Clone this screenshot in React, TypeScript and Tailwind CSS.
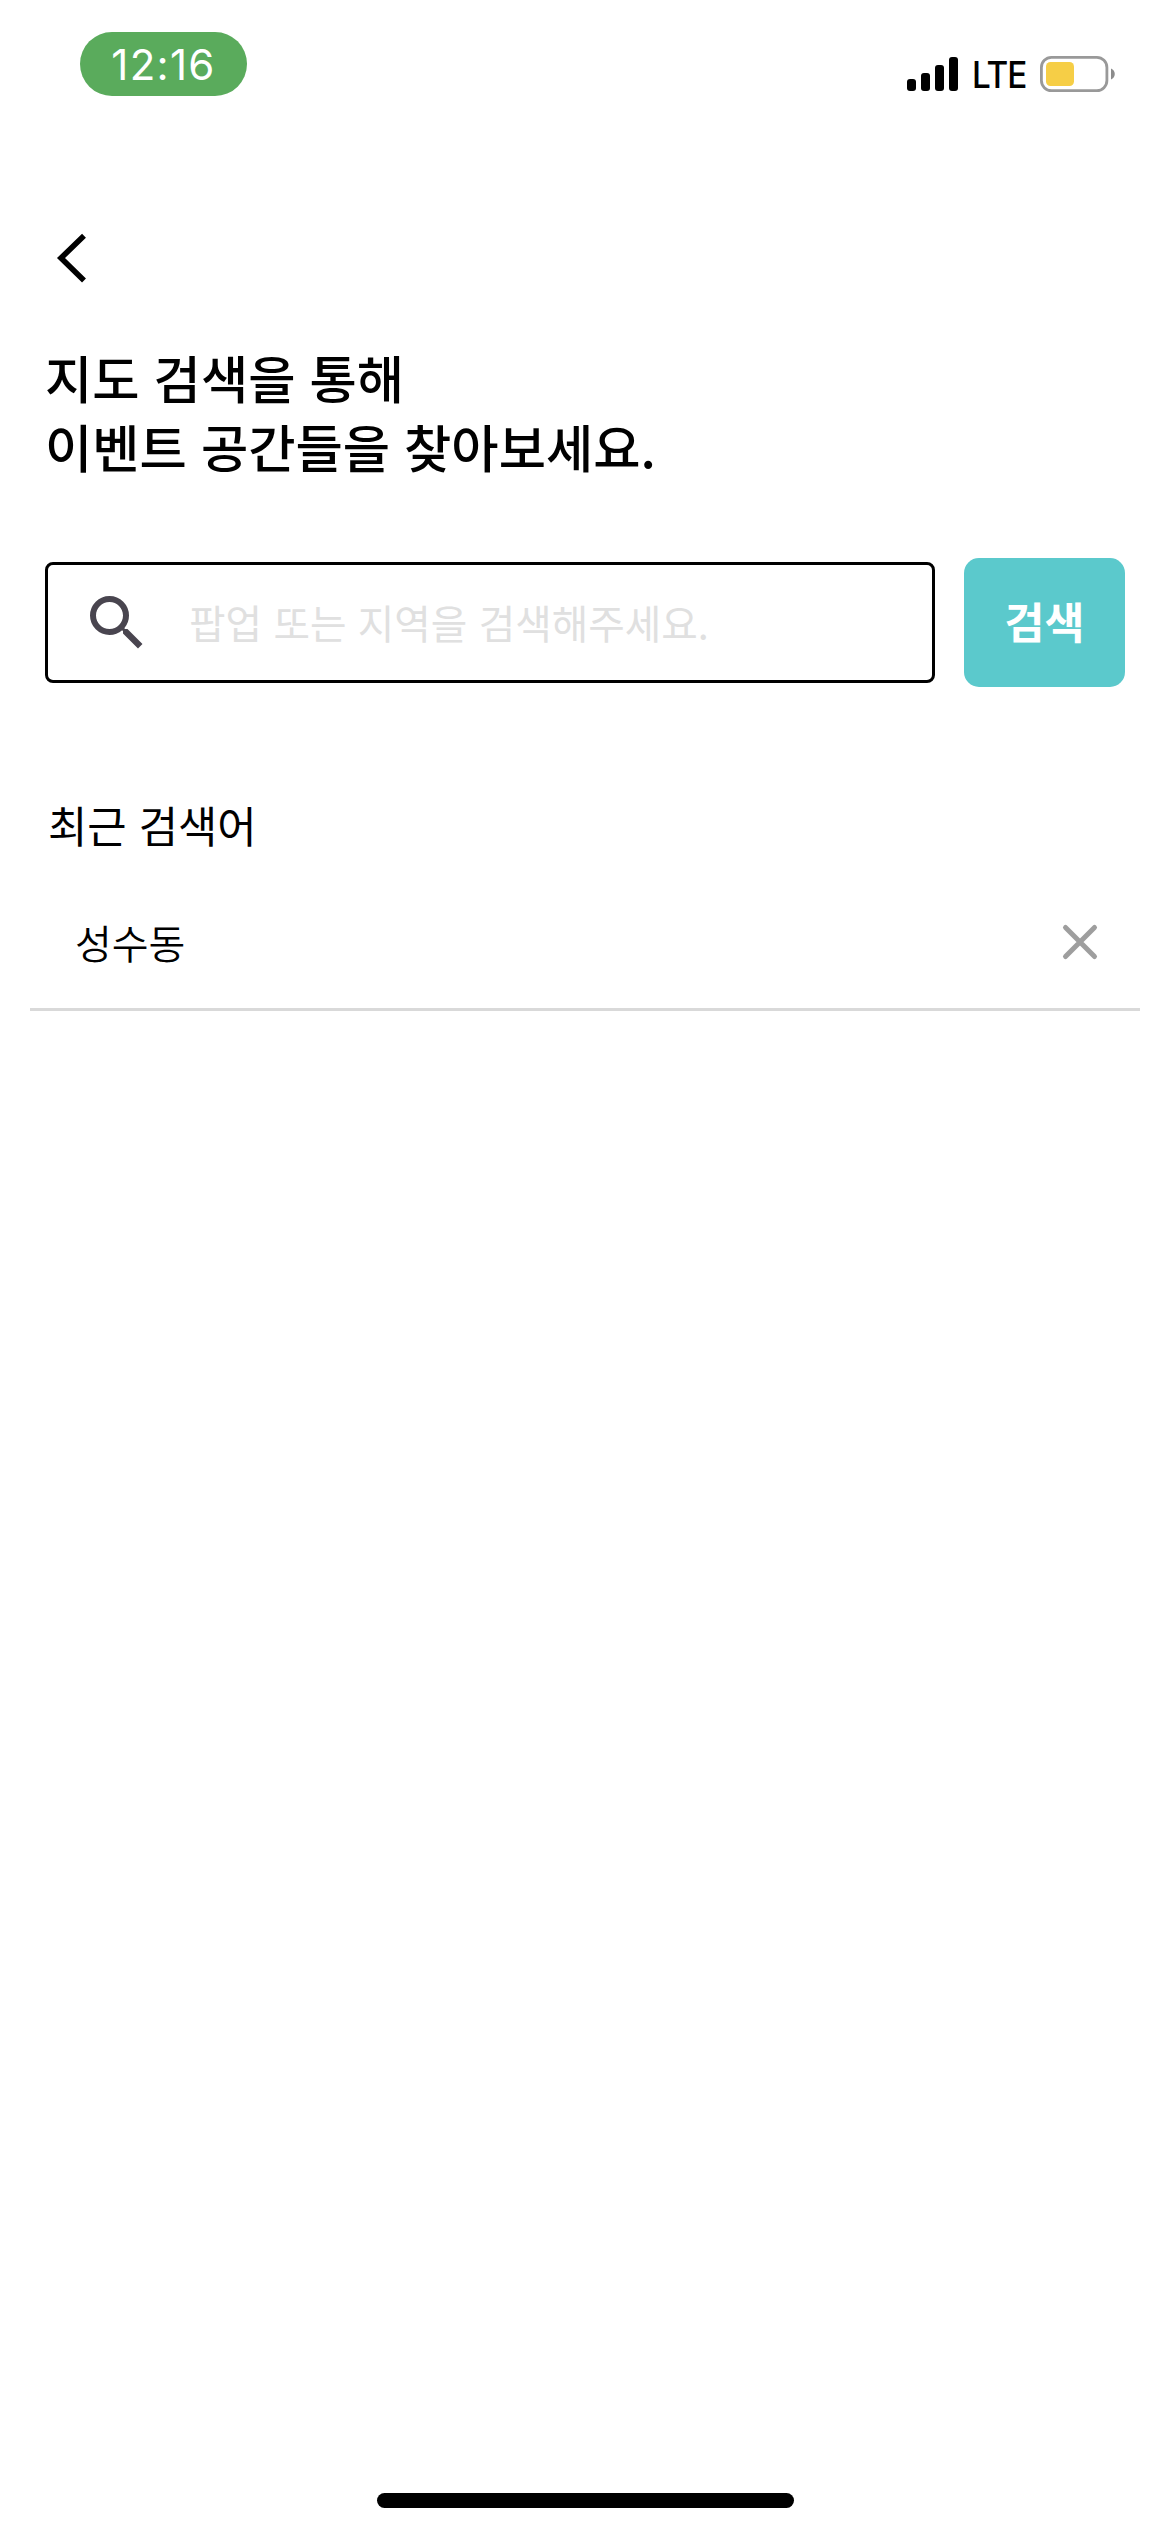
import React, { useState } from 'react';
import { MdSearch } from 'react-icons/md';

const StatusBar: React.FC = () => (
  <div className="flex h-[141px] items-start justify-between pl-20 pr-[54px] pt-8">
    <div className="flex h-16 w-[167px] items-center justify-center rounded-full bg-[#5aab5c] pt-px font-['Inter',sans-serif] text-[42px] leading-none tracking-[1.3px] text-white">
      12:16
    </div>
    <div className="mt-6 flex h-9 items-center">
      <svg width="51" height="34" viewBox="0 0 51 34" fill="#000">
        <rect x="0" y="22" width="9" height="12" rx="3" />
        <rect x="14" y="16" width="9" height="18" rx="3" />
        <rect x="28" y="8" width="9" height="26" rx="3" />
        <rect x="42" y="0" width="9" height="34" rx="3" />
      </svg>
      <span className="ml-3.5 mt-0.5 w-[68px] origin-left scale-x-90 font-['Inter',sans-serif] text-[37px] font-medium leading-9 tracking-[-1.2px] text-black">LTE</span>
      <svg width="76" height="36" viewBox="0 0 76 36">
        <rect x="1.4" y="1.4" width="65.5" height="33.2" rx="10" fill="none" stroke="#999" strokeWidth="2.8" />
        <rect x="6" y="6" width="28" height="24" rx="4.5" fill="#f6ce46" />
        <path d="M71 12.5c5 2 5 9 0 11z" fill="#8c8c8c" />
      </svg>
    </div>
  </div>
);

interface RecentItemProps {
  keyword: string;
  onRemove: () => void;
}

const RecentItem: React.FC<RecentItemProps> = ({ keyword, onRemove }) => (
  <li className="flex h-[135px] items-center justify-between border-b-[3px] border-[#d9d9d9] pl-[45px] pr-[41px]">
    <span className="text-[40px] font-[350] leading-[60px]">{keyword}</span>
    <button onClick={onRemove} aria-label="삭제">
      <svg width="38" height="38" viewBox="0 0 38 38" fill="none" stroke="#9e9e9e" strokeWidth="5" strokeLinecap="round">
        <path d="M4.5 4.5l29 29M33.5 4.5l-29 29" />
      </svg>
    </button>
  </li>
);

export default function App() {
  const [query, setQuery] = useState('');
  const [recent, setRecent] = useState(['성수동']);

  return (
    <div className="flex h-[2532px] w-[1170px] flex-col bg-white font-['Noto_Sans_CJK_KR',sans-serif] text-black">
      <StatusBar />

      <div className="flex h-[201px] pl-[55px] pt-[91px]">
        <button className="h-[52px] w-9" aria-label="뒤로">
          <svg width="36" height="52" viewBox="0 0 36 52" fill="none" stroke="#000" strokeWidth="5.6">
            <path d="M29 3.8L6 26l23 22.4" />
          </svg>
        </button>
      </div>

      <h1 className="h-[216px] pl-[45px] text-[51.4px] font-medium leading-[69px] [word-spacing:2.5px]">
        지도 검색을 통해
        <br />
        이벤트 공간들을 찾아보세요.
      </h1>

      <div className="flex h-[129px] items-center justify-between pl-[45px] pr-[45px]">
        <div className="flex h-[121px] w-[890px] items-center rounded-lg border-[3px] border-black pl-[33px]">
          <MdSearch className="size-[72px] text-[#49454f]" />
          <input
            value={query}
            onChange={(e) => setQuery(e.target.value)}
            placeholder="팝업 또는 지역을 검색해주세요."
            className="mb-0.5 ml-9 h-[60px] w-[640px] text-[39.7px] outline-none [word-spacing:2.5px] placeholder:text-[#e0e0e0]"
          />
        </div>
        <button className="h-[129px] w-[161px] rounded-[15px] bg-[#5bc9cc] pb-1 text-[43.5px] font-bold text-white">검색</button>
      </div>

      <section className="pt-[105px]">
        <h2 className="h-[84px] pl-12 text-[42.7px] leading-[64px] [word-spacing:2.7px]">최근 검색어</h2>
        <ul className="px-[30px]">
          {recent.map((keyword) => (
            <RecentItem
              key={keyword}
              keyword={keyword}
              onRemove={() => setRecent(recent.filter((k) => k !== keyword))}
            />
          ))}
        </ul>
      </section>

      <div className="mb-6 ml-[377px] mt-auto h-[15px] w-[417px] rounded-full bg-black" />
    </div>
  );
}
